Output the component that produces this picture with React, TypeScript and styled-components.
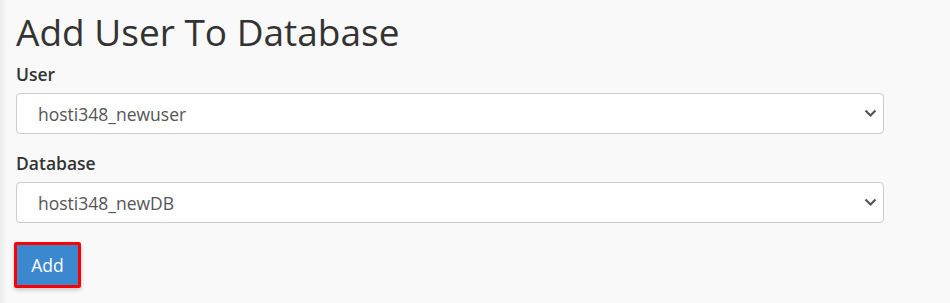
import React from 'react';
import styled, { createGlobalStyle } from 'styled-components';

const GlobalStyle = createGlobalStyle`
  html, body {
    margin: 0;
    padding: 0;
    background: #f9f9f9;
  }
  body {
    font-family: "Open Sans", "Liberation Sans", sans-serif;
    color: #333333;
  }
`;

const Page = styled.div`
  min-height: 303px;
  padding: 10px 66px 0 16px;
  background: linear-gradient(to right, #ececec 0px, #f9f9f9 7px);
  box-sizing: border-box;
`;

const Title = styled.h1`
  margin: 0 0 8px 0;
  font-size: 37px;
  font-weight: 400;
  line-height: 44px;
  color: #333333;
`;

const Field = styled.div`
  display: flex;
  flex-direction: column;
  margin-bottom: 17px;
`;

const Label = styled.label`
  font-size: 17.5px;
  font-weight: 600;
  line-height: 24px;
  margin-bottom: 7px;
  color: #333333;
`;

const SelectBox = styled.div`
  height: 41px;
  box-sizing: border-box;
  border: 1px solid #cccccc;
  border-radius: 4px;
  background: #ffffff;
  display: flex;
  align-items: center;
  padding: 0 21px;
  font-size: 17.5px;
  color: #555555;
`;

const Chevron = styled.svg`
  margin-left: auto;
  margin-right: -15px;
  width: 13px;
  height: 9px;
`;

const ButtonFrame = styled.div`
  display: inline-block;
  margin: 2px 0 0 -2px;
  border: 3px solid #ff0000;
  border-radius: 2px;
  box-shadow: 0 2px 4px rgba(0, 0, 0, 0.2);
`;

const AddButton = styled.button`
  display: block;
  width: 61px;
  height: 40px;
  border: 0;
  background: #3c88cf;
  color: #ffffff;
  font-family: "Open Sans", "Liberation Sans", sans-serif;
  font-size: 17.5px;
  padding: 0;
  cursor: pointer;
`;

const Select = ({ value }: { value: string }) => (
  <SelectBox>
    <span>{value}</span>
    <Chevron viewBox="0 0 13 9">
      <path d="M1.5 1.5 L6.5 6.5 L11.5 1.5" fill="none" stroke="#555" strokeWidth="2.2" />
    </Chevron>
  </SelectBox>
);

export default function App() {
  return (
    <>
      <GlobalStyle />
      <Page>
        <Title>Add User To Database</Title>
        <Field>
          <Label>User</Label>
          <Select value="hosti348_newuser" />
        </Field>
        <Field>
          <Label>Database</Label>
          <Select value="hosti348_newDB" />
        </Field>
        <ButtonFrame>
          <AddButton>Add</AddButton>
        </ButtonFrame>
      </Page>
    </>
  );
}
